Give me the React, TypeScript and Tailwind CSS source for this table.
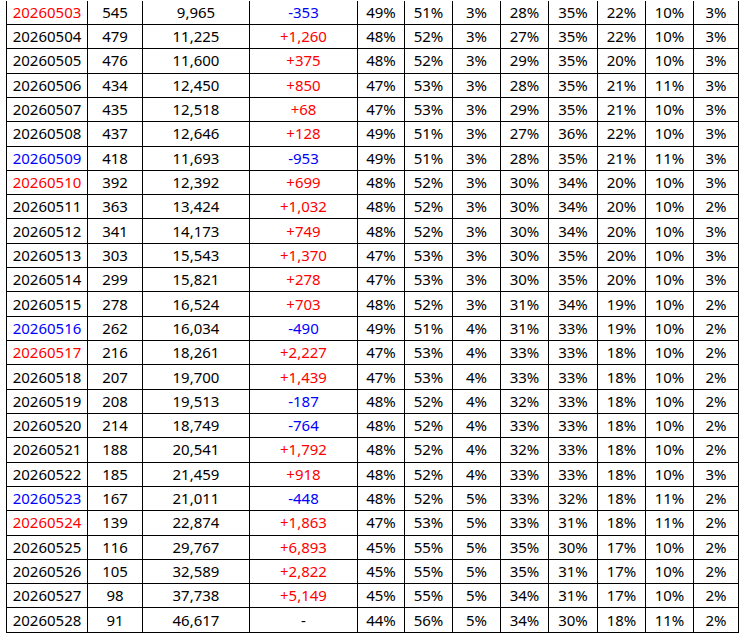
import React from "react";

type Row = [string, string, string, string, string[], "r" | "b" | ""];

const rows: Row[] = [
  ["20260503", "545", "9,965", "-353", ["49%", "51%", "3%", "28%", "35%", "22%", "10%", "3%"], "r"],
  ["20260504", "479", "11,225", "+1,260", ["48%", "52%", "3%", "27%", "35%", "22%", "10%", "3%"], ""],
  ["20260505", "476", "11,600", "+375", ["48%", "52%", "3%", "29%", "35%", "20%", "10%", "3%"], ""],
  ["20260506", "434", "12,450", "+850", ["47%", "53%", "3%", "28%", "35%", "21%", "11%", "3%"], ""],
  ["20260507", "435", "12,518", "+68", ["47%", "53%", "3%", "29%", "35%", "21%", "10%", "3%"], ""],
  ["20260508", "437", "12,646", "+128", ["49%", "51%", "3%", "27%", "36%", "22%", "10%", "3%"], ""],
  ["20260509", "418", "11,693", "-953", ["49%", "51%", "3%", "28%", "35%", "21%", "11%", "3%"], "b"],
  ["20260510", "392", "12,392", "+699", ["48%", "52%", "3%", "30%", "34%", "20%", "10%", "3%"], "r"],
  ["20260511", "363", "13,424", "+1,032", ["48%", "52%", "3%", "30%", "34%", "20%", "10%", "2%"], ""],
  ["20260512", "341", "14,173", "+749", ["48%", "52%", "3%", "30%", "34%", "20%", "10%", "3%"], ""],
  ["20260513", "303", "15,543", "+1,370", ["47%", "53%", "3%", "30%", "35%", "20%", "10%", "3%"], ""],
  ["20260514", "299", "15,821", "+278", ["47%", "53%", "3%", "30%", "35%", "20%", "10%", "3%"], ""],
  ["20260515", "278", "16,524", "+703", ["48%", "52%", "3%", "31%", "34%", "19%", "10%", "2%"], ""],
  ["20260516", "262", "16,034", "-490", ["49%", "51%", "4%", "31%", "33%", "19%", "10%", "2%"], "b"],
  ["20260517", "216", "18,261", "+2,227", ["47%", "53%", "4%", "33%", "33%", "18%", "10%", "2%"], "r"],
  ["20260518", "207", "19,700", "+1,439", ["47%", "53%", "4%", "33%", "33%", "18%", "10%", "2%"], ""],
  ["20260519", "208", "19,513", "-187", ["48%", "52%", "4%", "32%", "33%", "18%", "10%", "2%"], ""],
  ["20260520", "214", "18,749", "-764", ["48%", "52%", "4%", "33%", "33%", "18%", "10%", "2%"], ""],
  ["20260521", "188", "20,541", "+1,792", ["48%", "52%", "4%", "32%", "33%", "18%", "10%", "2%"], ""],
  ["20260522", "185", "21,459", "+918", ["48%", "52%", "4%", "33%", "33%", "18%", "10%", "3%"], ""],
  ["20260523", "167", "21,011", "-448", ["48%", "52%", "5%", "33%", "32%", "18%", "11%", "2%"], "b"],
  ["20260524", "139", "22,874", "+1,863", ["47%", "53%", "5%", "33%", "31%", "18%", "11%", "2%"], "r"],
  ["20260525", "116", "29,767", "+6,893", ["45%", "55%", "5%", "35%", "30%", "17%", "10%", "2%"], ""],
  ["20260526", "105", "32,589", "+2,822", ["45%", "55%", "5%", "35%", "31%", "17%", "10%", "2%"], ""],
  ["20260527", "98", "37,738", "+5,149", ["45%", "55%", "5%", "34%", "31%", "17%", "10%", "2%"], ""],
  ["20260528", "91", "46,617", "-", ["44%", "56%", "5%", "34%", "30%", "18%", "11%", "2%"], ""],
];

const pctWidths = ["w-[47px]", "w-[48px]", "w-[48px]", "w-[48px]", "w-[49px]", "w-[48px]", "w-[48px]", "w-[45px]"];

const cell = "flex items-center justify-center border-r border-black shrink-0";

export default function App() {
  return (
    <div
      className="bg-white w-[745px] h-[638px] overflow-hidden text-[15px] text-black pt-[0.68px]"
      style={{ fontFamily: '"Noto Sans", "Liberation Sans", sans-serif' }}
    >
      <div className="ml-[6px] w-[733px] border-l border-black flex flex-col">
        {rows.map((r, i) => {
          const dateColor = r[5] === "r" ? "text-[#ff0000]" : r[5] === "b" ? "text-[#0000ff]" : "";
          const chg = r[3];
          const chgColor = chg.startsWith("+") ? "text-[#ff0000]" : chg.length > 1 ? "text-[#0000ff]" : "";
          return (
            <div key={i} className="flex h-[24.32px] border-b border-black leading-none">
              <div className={`${cell} w-[81px] ${dateColor}`}>{r[0]}</div>
              <div className={`${cell} w-[55px]`}>{r[1]}</div>
              <div className={`${cell} w-[107px]`}>{r[2]}</div>
              <div className={`${cell} w-[108px] ${chgColor}`}>{chg}</div>
              {r[4].map((p, j) => (
                <div key={j} className={`${cell} ${pctWidths[j]}`}>{p}</div>
              ))}
            </div>
          );
        })}
      </div>
    </div>
  );
}
